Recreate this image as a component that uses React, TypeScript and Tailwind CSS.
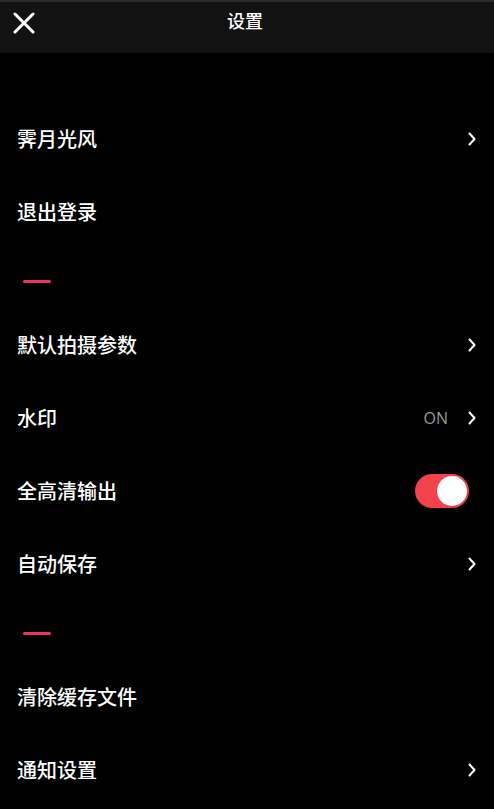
import React from "react";

const font = { fontFamily: '"Noto Sans CJK SC", "Noto Sans", sans-serif' };

function Chevron() {
  return (
    <svg width="10" height="14" viewBox="0 0 10 14" className="text-white">
      <path d="M2.5 1.5 L7.5 7 L2.5 12.5" fill="none" stroke="currentColor" strokeWidth="2" strokeLinecap="round" strokeLinejoin="round" />
    </svg>
  );
}

function Row({ label, right }: { label: string; right?: React.ReactNode }) {
  return (
    <div className="h-[73px] flex items-center justify-between pl-[17px] pr-[17px]">
      <span className="text-[20px] font-medium text-white leading-none">{label}</span>
      {right}
    </div>
  );
}

function Divider() {
  return (
    <div className="h-[60px] flex items-center pl-[23px] pt-[6px]">
      <div className="w-[28px] h-[3px] rounded-full bg-[#e8375a]" />
    </div>
  );
}

function Toggle() {
  return (
    <div className="w-[54px] h-[34px] rounded-full bg-[#f2424b] flex items-center justify-end pr-[2px] mr-[8px]">
      <div className="w-[30px] h-[30px] rounded-full bg-white" />
    </div>
  );
}

export default function App() {
  return (
    <div className="w-[494px] h-[809px] bg-black overflow-hidden" style={font}>
      {/* Header */}
      <div className="h-[53px] bg-[#121212] border-t-2 border-[#2a2a2a] relative flex items-center justify-center">
        <svg width="22" height="22" viewBox="0 0 22 22" className="absolute left-[13px] top-[10px]">
          <path d="M2 2 L20 20 M20 2 L2 20" stroke="white" strokeWidth="3" strokeLinecap="round" />
        </svg>
        <span className="text-[18px] font-medium text-white -mt-[14px] -ml-[4px]">设置</span>
      </div>

      <div className="h-[49px]" />
      <Row label="霁月光风" right={<Chevron />} />
      <Row label="退出登录" />
      <Divider />
      <Row label="默认拍摄参数" right={<Chevron />} />
      <Row
        label="水印"
        right={
          <div className="flex items-center gap-[19px]">
            <span className="text-[16px] text-[#9a9a9a]" style={{ fontFamily: '"Open Sans", sans-serif' }}>ON</span>
            <Chevron />
          </div>
        }
      />
      <Row label="全高清输出" right={<Toggle />} />
      <Row label="自动保存" right={<Chevron />} />
      <Divider />
      <Row label="清除缓存文件" />
      <Row label="通知设置" right={<Chevron />} />
    </div>
  );
}
